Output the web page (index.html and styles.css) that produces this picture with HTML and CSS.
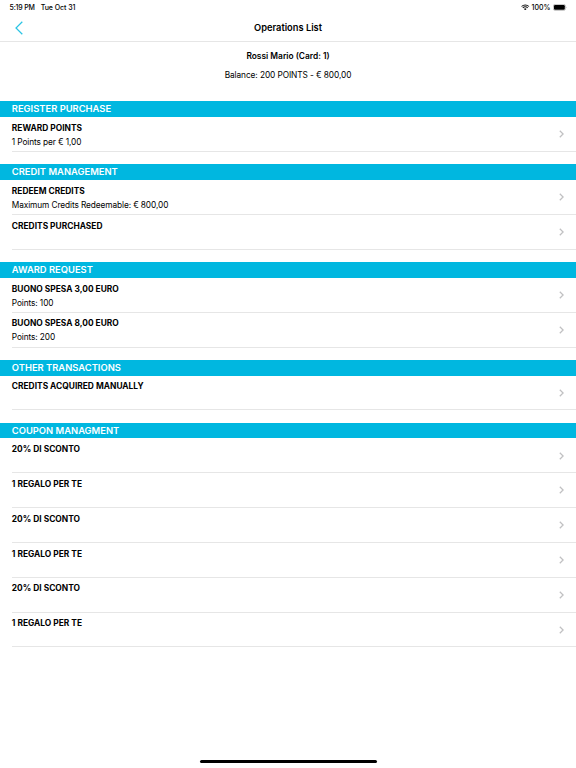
FILE: index.html
```html
<!DOCTYPE html>
<html lang="en">
<head>
    <meta charset="UTF-8" />
    <meta name="viewport" content="width=device-width, initial-scale=1.0" />
    <title>Operations List</title>
    <link rel="stylesheet" href="styles.css">
</head>
<body>

<!-- Shared icons -->
<svg class="icon-defs" aria-hidden="true">
    <symbol id="chevron" viewBox="0 0 5 8">
        <path d="M0.8 0.7L4.1 4L0.8 7.3" fill="none" stroke="#c0c0c2" stroke-width="1.25" />
    </symbol>
</svg>

<!-- Status Bar -->
<div class="status-bar">
    <span class="time">5:19 PM</span>
    <span class="date">Tue Oct 31</span>
    <svg class="wifi" viewBox="0 0 16 12">
        <path d="M1 4.6a10 10 0 0 1 14 0M3.4 7.1a6.5 6.5 0 0 1 9.2 0" fill="none" stroke="#111" stroke-width="1.9" />
        <path d="M5.5 9.1a3.6 3.6 0 0 1 5 0L8 11.8z" fill="#111" />
    </svg>
    <span class="percent">100%</span>
    <svg class="battery" viewBox="0 0 15 7">
        <rect x="0.3" y="0.3" width="12.6" height="6.2" rx="1.8" fill="none" stroke="#999" stroke-width="0.6" />
        <rect x="1" y="1" width="11.2" height="4.8" rx="1.1" fill="#000" />
        <path d="M13.6 2.4q1 1 0 2z" fill="#999" />
    </svg>
</div>

<!-- Navigation -->
<div class="nav-bar">
    <svg class="back" viewBox="0 0 8 14">
        <path d="M7.3 0.8L1 7L7.3 13.2" fill="none" stroke="#2bc4e4" stroke-width="1.25" />
    </svg>
    <h1>Operations List</h1>
</div>

<div class="customer">
    <p class="customer-name">Rossi Mario (Card: 1)</p>
    <p class="balance">Balance: 200 POINTS - € 800,00</p>
</div>

<!-- Operations -->
<div class="section">
    <h2>REGISTER PURCHASE</h2>
    <div class="row">
        <div><h3>REWARD POINTS</h3><p>1 Points per € 1,00</p></div>
        <svg class="chevron"><use href="#chevron" /></svg>
    </div>
</div>

<div class="section">
    <h2>CREDIT MANAGEMENT</h2>
    <div class="row">
        <div><h3>REDEEM CREDITS</h3><p>Maximum Credits Redeemable: € 800,00</p></div>
        <svg class="chevron"><use href="#chevron" /></svg>
    </div>
    <div class="row">
        <div><h3>CREDITS PURCHASED</h3></div>
        <svg class="chevron"><use href="#chevron" /></svg>
    </div>
</div>

<div class="section">
    <h2>AWARD REQUEST</h2>
    <div class="row">
        <div><h3>BUONO SPESA 3,00 EURO</h3><p>Points: 100</p></div>
        <svg class="chevron"><use href="#chevron" /></svg>
    </div>
    <div class="row">
        <div><h3>BUONO SPESA 8,00 EURO</h3><p>Points: 200</p></div>
        <svg class="chevron"><use href="#chevron" /></svg>
    </div>
</div>

<div class="section">
    <h2>OTHER TRANSACTIONS</h2>
    <div class="row">
        <div><h3>CREDITS ACQUIRED MANUALLY</h3></div>
        <svg class="chevron"><use href="#chevron" /></svg>
    </div>
</div>

<div class="section">
    <h2>COUPON MANAGMENT</h2>
    <div class="row">
        <div><h3>20% DI SCONTO</h3></div>
        <svg class="chevron"><use href="#chevron" /></svg>
    </div>
    <div class="row">
        <div><h3>1 REGALO PER TE</h3></div>
        <svg class="chevron"><use href="#chevron" /></svg>
    </div>
    <div class="row">
        <div><h3>20% DI SCONTO</h3></div>
        <svg class="chevron"><use href="#chevron" /></svg>
    </div>
    <div class="row">
        <div><h3>1 REGALO PER TE</h3></div>
        <svg class="chevron"><use href="#chevron" /></svg>
    </div>
    <div class="row">
        <div><h3>20% DI SCONTO</h3></div>
        <svg class="chevron"><use href="#chevron" /></svg>
    </div>
    <div class="row">
        <div><h3>1 REGALO PER TE</h3></div>
        <svg class="chevron"><use href="#chevron" /></svg>
    </div>
</div>

<div class="home-indicator"></div>

</body>
</html>
```
FILE: styles.css
```css
/* Basic Styles */
* {
    box-sizing: border-box;
}

body {
    font-family: Inter, "Liberation Sans", sans-serif;
    background-color: #fff;
    color: #000;
    margin: 0;
    height: 768px;
    display: flex;
    flex-direction: column;
    overflow: hidden;
}

h1, h2, h3, p {
    margin: 0;
}

.icon-defs {
    display: none;
}

/* Status Bar */
.status-bar {
    height: 14px;
    padding: 0 8.5px 0 9.5px;
    display: flex;
    align-items: center;
    font-size: 7px;
    font-weight: 500;
}

.time {
    letter-spacing: -0.2px;
}

.date {
    margin-left: 6px;
    letter-spacing: -0.04px;
}

.wifi {
    width: 8.5px;
    height: 6.5px;
    margin-left: auto;
    margin-right: 2px;
}

.percent {
    margin-right: 2.5px;
}

.battery {
    width: 14.5px;
    height: 7px;
}

/* Navigation */
.nav-bar {
    height: 28px;
    border-bottom: 1px solid #e6e6e6;
    display: grid;
    grid-template-columns: 40px 1fr 40px;
    align-items: center;
}

.back {
    width: 8px;
    height: 14px;
    margin-left: 14.8px;
}

h1 {
    font-size: 9.3px;
    font-weight: 600;
    text-align: center;
}

.customer {
    height: 59.4px;
    padding-top: 8px;
    text-align: center;
    line-height: 12px;
}

.customer-name {
    font-size: 8.4px;
    font-weight: 600;
}

.balance {
    font-size: 8.3px;
    letter-spacing: -0.08px;
    margin-top: 7.4px;
}

/* Operations */
.section {
    margin-bottom: 12.2px;
}

h2 {
    height: 15.9px;
    padding-left: 11.8px;
    background-color: #00b7e0;
    color: #fff;
    font-size: 9.4px;
    font-weight: 600;
    line-height: 16.8px;
}

.row {
    height: 34.82px;
    margin-left: 11.8px;
    padding: 4.7px 12px 0 0;
    border-bottom: 1px solid #e6e6e6;
    display: flex;
    justify-content: space-between;
}

h3 {
    font-size: 8.4px;
    font-weight: 700;
    line-height: 12px;
    letter-spacing: 0.01px;
}

.row p {
    font-size: 8.3px;
    line-height: 12px;
    letter-spacing: -0.1px;
    margin-top: 2px;
}

.chevron {
    width: 5px;
    height: 8px;
    margin-top: 8.5px;
}

.home-indicator {
    width: 177px;
    height: 3px;
    margin: auto auto 5px;
    border-radius: 2px;
    background-color: #000;
}
```
